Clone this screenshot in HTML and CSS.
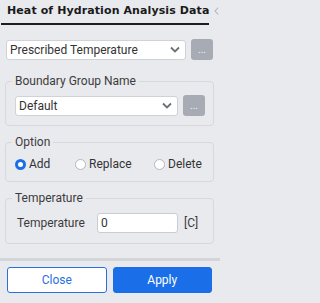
FILE: index.html
```html
<!DOCTYPE html>
<html>
<head>
<meta charset="utf-8">
<link rel="stylesheet" href="styles.css">
</head>
<body>
<div class="panel">
  <div class="header">
    <div class="title">Heat of Hydration Analysis Data</div>
    <svg class="collapse" width="8" height="12" viewBox="0 0 8 12"><path d="M6 1 L1.5 6 L6 11" fill="none" stroke="#b4b8be" stroke-width="1.6"/></svg>
  </div>
  <div class="content">
    <div class="row top-row">
      <div class="select wide">
        <span>Prescribed Temperature</span>
        <svg class="chev" width="10" height="7" viewBox="0 0 10 7"><path d="M1 1.5 L5 5.5 L9 1.5" fill="none" stroke="#6b6f76" stroke-width="1.8"/></svg>
      </div>
      <div class="more"><span>...</span></div>
    </div>

    <fieldset class="group">
      <legend>Boundary Group Name</legend>
      <div class="row">
        <div class="select inner">
          <span>Default</span>
          <svg class="chev" width="10" height="7" viewBox="0 0 10 7"><path d="M1 1.5 L5 5.5 L9 1.5" fill="none" stroke="#6b6f76" stroke-width="1.8"/></svg>
        </div>
        <div class="more"><span>...</span></div>
      </div>
    </fieldset>

    <fieldset class="group">
      <legend>Option</legend>
      <div class="radios">
        <label class="radio"><span class="dot checked"></span>Add</label>
        <label class="radio"><span class="dot"></span>Replace</label>
        <label class="radio"><span class="dot"></span>Delete</label>
      </div>
    </fieldset>

    <fieldset class="group">
      <legend>Temperature</legend>
      <div class="field">
        <span class="lbl">Temperature</span>
        <div class="input">0</div>
        <span class="unit">[C]</span>
      </div>
    </fieldset>
  </div>
  <div class="footer">
    <button class="btn close">Close</button>
    <button class="btn apply">Apply</button>
  </div>
</div>
</body>
</html>
```

FILE: styles.css
```css
html, body {
  margin: 0;
  padding: 0;
}
body {
  width: 220px;
  height: 303px;
  background: #e9eaee;
  font-family: Roboto, "Noto Sans", sans-serif;
  font-size: 12px;
  color: #333;
  overflow: hidden;
}
.panel {
  display: flex;
  flex-direction: column;
  height: 303px;
}
.header {
  display: flex;
  align-items: flex-start;
  height: 25px;
}
.title {
  margin-left: 1px;
  width: 203px;
  padding-left: 6px;
  height: 23px;
  border-bottom: 2px solid #1e1e1e;
  font-family: "DejaVu Sans", Verdana, sans-serif;
  font-weight: 700;
  font-size: 11px;
  letter-spacing: 0.1px;
  line-height: 21px;
  color: #1a1a1a;
  white-space: nowrap;
}
.collapse {
  margin-left: 5px;
  margin-top: 5px;
}
.content {
  flex: 1;
  padding: 0 6px 0 5px;
}
.row {
  display: flex;
  align-items: center;
}
.top-row {
  margin-top: 14px;
  padding-left: 1px;
  gap: 5px;
}
.select {
  box-sizing: border-box;
  height: 20px;
  background: #fff;
  border: 1px solid #cfd2d7;
  border-radius: 3px;
  display: flex;
  align-items: center;
  justify-content: space-between;
  padding: 0 5px 0 3px;
  white-space: nowrap;
}
.select.wide { width: 180px; }
.select.inner { width: 163px; }
.more {
  width: 22px;
  height: 21px;
  background: #a7acb4;
  border-radius: 3px;
  display: flex;
  align-items: center;
  justify-content: center;
  color: #f2f3f5;
  font-size: 10px;
  line-height: 10px;
}
.group .row { gap: 5px; }
.group {
  margin: 13px 0 0;
  border: 1px solid #d6d8dd;
  border-radius: 4px;
  padding: 6px 6px 9px 9px;
  min-width: 0;
}
.group + .group { margin-top: 8px; }
legend {
  padding: 0 3px;
  margin-left: -3px;
  line-height: 16px;
  font-size: 12px;
  color: #3c3c3c;
}
.radios {
  display: flex;
  align-items: center;
  height: 16px;
}
.radio {
  display: flex;
  align-items: center;
  gap: 3px;
  color: #333;
}
.radio:nth-child(1) { width: 60px; }
.radio:nth-child(2) { width: 79px; }
.dot {
  box-sizing: border-box;
  width: 11px;
  height: 11px;
  border-radius: 50%;
  background: #fff;
  border: 1px solid #b3b7be;
}
.dot.checked {
  border: 3px solid #1a6fe6;
}
.field {
  display: flex;
  align-items: center;
  height: 22px;
  padding-left: 2px;
}
.lbl { width: 80px; color: #3c3c3c; }
.input {
  box-sizing: border-box;
  width: 81px;
  height: 20px;
  background: #fff;
  border: 1px solid #c9ccd2;
  border-radius: 3px;
  padding-left: 3px;
  line-height: 18px;
}
.unit { margin-left: 6px; color: #3c3c3c; }
.footer {
  border-top: 3px solid #d3d5d9;
  display: flex;
  gap: 6px;
  padding: 6px 8px 10px 7px;
}
.btn {
  flex: 1;
  height: 26px;
  border-radius: 3px;
  font-family: Roboto, "Noto Sans", sans-serif;
  font-size: 12px;
  padding: 0;
}
.close {
  background: #fff;
  border: 1px solid #2a6fe0;
  color: #2a6fe0;
}
.apply {
  background: #1a6fe8;
  border: 1px solid #1a6fe8;
  color: #fff;
}
```
